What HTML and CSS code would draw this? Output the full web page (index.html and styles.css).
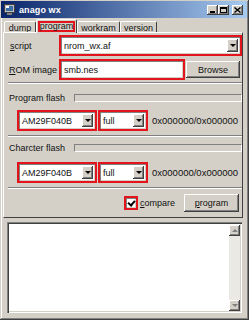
FILE: index.html
```html
<!DOCTYPE html>
<html lang="en">

<head>
  <link rel="stylesheet" href="styles.css">
  <meta charset="UTF-8">
  <title>anago wx</title>
</head>

<body>
<div class="window">
  <div class="titlebar">
    <svg class="app-icon" width="11" height="11" viewBox="0 0 11 11">
      <rect x="0.5" y="0.5" width="10" height="8" fill="#c0c0c0" stroke="#404040"/>
      <rect x="2" y="2" width="7" height="5" fill="#3a6ea5"/>
      <rect x="2" y="2" width="3" height="2" fill="#ffffff"/>
      <rect x="3" y="9" width="5" height="2" fill="#808080"/>
    </svg>
    <span class="title">anago wx</span>
    <div class="caption">
      <span class="cap-btn"><svg width="7" height="6" viewBox="0 0 7 6"><rect x="1" y="4" width="5" height="2" fill="#000"/></svg></span>
      <span class="cap-btn"><svg width="7" height="6" viewBox="0 0 7 6"><rect x="0.5" y="0.5" width="6" height="5" fill="none" stroke="#000"/><rect x="0" y="0" width="7" height="2" fill="#000"/></svg></span>
      <span class="cap-btn close"><svg width="7" height="6" viewBox="0 0 7 6"><path d="M0.5 0.5 L6.5 5.5 M6.5 0.5 L0.5 5.5" stroke="#000" stroke-width="1.4"/></svg></span>
    </div>
  </div>

  <div class="tabs">
    <span class="tab tab-dump">dump</span>
    <span class="tab tab-program active"><span class="mark mark-tab">program</span></span>
    <span class="tab tab-workram">workram</span>
    <span class="tab tab-version">version</span>
  </div>

  <div class="panel">
    <div class="row row-script">
      <span class="label label-script"><u>s</u>cript</span>
      <div class="mark mark-script">
        <div class="combo"><span class="combo-text">nrom_wx.af</span><span class="drop"></span></div>
      </div>
    </div>

    <div class="row row-rom">
      <span class="label"><u>R</u>OM image</span>
      <div class="mark mark-rom">
        <div class="field">smb.nes</div>
      </div>
      <button class="btn btn-browse">Browse</button>
    </div>

    <div class="sep"></div>

    <div class="row row-flash">
      <span class="flash-label">Program flash</span>
      <div class="progress"></div>
    </div>

    <div class="row row-device">
      <div class="mark mark-chip">
        <div class="combo"><span class="combo-text">AM29F040B</span><span class="drop"></span></div>
      </div>
      <div class="mark mark-mode">
        <div class="combo"><span class="combo-text">full</span><span class="drop"></span></div>
      </div>
      <span class="hex">0x000000/0x000000</span>
    </div>

    <div class="sep sep-mid"></div>

    <div class="row row-flash row-flash-2">
      <span class="flash-label">Charcter flash</span>
      <div class="progress"></div>
    </div>

    <div class="row row-device row-device-2">
      <div class="mark mark-chip">
        <div class="combo"><span class="combo-text">AM29F040B</span><span class="drop"></span></div>
      </div>
      <div class="mark mark-mode">
        <div class="combo"><span class="combo-text">full</span><span class="drop"></span></div>
      </div>
      <span class="hex">0x000000/0x000000</span>
    </div>

    <div class="sep sep-mid"></div>

    <div class="row row-action">
      <span class="mark mark-check"><span class="checkbox"></span></span>
      <span class="check-label"><u>c</u>ompare</span>
      <button class="btn btn-program"><u>p</u>rogram</button>
    </div>
  </div>

  <div class="log">
    <div class="log-text"></div>
    <div class="scrollbar">
      <span class="scroll-btn"><span class="arrow-up"></span></span>
      <span class="scroll-track"></span>
      <span class="scroll-btn"><span class="arrow-down"></span></span>
    </div>
  </div>
</div>
</body>

</html>
```

FILE: styles.css
```css
* {
  box-sizing: border-box;
}

body {
  margin: 0;
  font-family: "Liberation Sans", Arial, sans-serif;
  font-size: 9px;
  color: #111;
}

.window {
  width: 249px;
  height: 320px;
  display: flex;
  flex-direction: column;
  padding: 1px 2px 4px 1px;
  background: #d4d0c8;
  box-shadow: inset -1px -1px #404040, inset 1px 1px #d4d0c8, inset -2px -2px #808080, inset 2px 2px #fff;
}

/* title bar */
.titlebar {
  height: 17px;
  display: flex;
  align-items: center;
  padding: 0 4px 0 3px;
  background: linear-gradient(to right, #0a246a, #a6caf0);
  color: #fff;
}

.app-icon {
  margin-right: 4px;
}

.title {
  flex: 1;
  font-weight: bold;
  font-size: 9px;
  letter-spacing: 0.1px;
}

.caption {
  display: flex;
  margin-top: 1px;
}

.cap-btn {
  width: 11px;
  height: 10px;
  display: flex;
  align-items: center;
  justify-content: center;
  background: #d4d0c8;
  box-shadow: inset -1px -1px #404040, inset 1px 1px #fff, inset -2px -2px #808080;
}

.cap-btn.close {
  margin-left: 3px;
}

/* tabs */
.tabs {
  display: flex;
  align-items: flex-end;
  height: 13px;
  margin: 1px 0 0 3px;
}

.tab {
  height: 11px;
  display: flex;
  align-items: center;
  justify-content: center;
  padding-top: 1px;
  border-top: 1px solid #fff;
  border-left: 1px solid #fff;
  border-right: 1px solid #404040;
  border-radius: 2px 2px 0 0;
  background: #d4d0c8;
}

.tab-dump { width: 32px; }
.tab-program { width: 41px; }
.tab-workram { width: 43px; }
.tab-version { width: 37px; }

.tab.active {
  height: 14px;
  margin-bottom: -1px;
  padding-top: 0;
  position: relative;
}

.mark {
  border: 2px solid #e3141b;
}

.mark-tab {
  height: 11px;
  width: 37px;
  display: flex;
  align-items: center;
  justify-content: center;
  line-height: 1;
}

/* tab page */
.panel {
  margin: 0 4px 0 2px;
  padding: 0 0 5px 5px;
  border-top: 1px solid #fff;
  border-left: 1px solid #fff;
  border-right: 1px solid #404040;
  border-bottom: 1px solid #404040;
}

.row {
  display: flex;
  align-items: center;
}

.label {
  width: 50px;
}

.label-script {
  padding-left: 1px;
}

.row-script {
  margin-top: 2px;
}

.mark-script {
  width: 183px;
  height: 21px;
}

.combo {
  height: 100%;
  display: flex;
  align-items: center;
  padding: 2px 2px 2px 3px;
  background: #fff;
  box-shadow: inset 1px 1px #808080, inset -1px -1px #d4d0c8;
}

.combo-text {
  flex: 1;
  white-space: nowrap;
}

.drop {
  width: 11px;
  height: 13px;
  display: flex;
  align-items: center;
  justify-content: center;
  background: #d4d0c8;
  box-shadow: inset -1px -1px #404040, inset 1px 1px #fff, inset -2px -2px #808080;
}

.drop::after,
.arrow-down {
  content: "";
  border-left: 3px solid transparent;
  border-right: 3px solid transparent;
  border-top: 3px solid #000;
}

.row-rom {
  margin-top: 3px;
}

.mark-rom {
  width: 126px;
  height: 21px;
}

.field {
  height: 100%;
  display: flex;
  align-items: center;
  padding-left: 3px;
  background: #fff;
  box-shadow: inset 1px 1px #808080, inset -1px -1px #d4d0c8;
}

.btn {
  font: inherit;
  font-size: 9px;
  color: #111;
  padding: 0;
  border: none;
  background: #d4d0c8;
  box-shadow: inset -1px -1px #404040, inset 1px 1px #fff, inset -2px -2px #808080;
}

.btn-browse {
  width: 54px;
  height: 17px;
  margin-left: 1px;
}

.sep {
  height: 2px;
  margin: 2px 0 0 -1px;
  border-top: 1px solid #808080;
  border-bottom: 1px solid #fff;
}

.sep-mid {
  margin-top: 4px;
}

.row-flash {
  height: 8px;
  margin-top: 10px;
}

.row-flash-2 {
  margin-top: 7px;
}

.flash-label {
  white-space: nowrap;
}

.progress {
  flex: 1;
  height: 8px;
  margin-left: 9px;
  border-top: 1px solid #808080;
  border-left: 1px solid #808080;
  border-right: 1px solid #fff;
  border-bottom: 1px solid #fff;
}

.row-device {
  margin-top: 8px;
  padding-left: 8px;
}

.row-device-2 {
  margin-top: 10px;
}

.mark-chip {
  width: 80px;
  height: 21px;
}

.mark-mode {
  width: 50px;
  height: 21px;
  margin-left: 1px;
}

.hex {
  margin-left: 4px;
  font-size: 9.5px;
  white-space: nowrap;
}

.row-action {
  justify-content: flex-end;
  margin-top: 5px;
  padding-right: 3px;
}

.mark-check {
  width: 14px;
  height: 14px;
  display: flex;
  align-items: center;
  justify-content: center;
}

.checkbox {
  width: 10px;
  height: 10px;
  background: #fff;
  box-shadow: inset 1px 1px #808080, inset -1px -1px #d4d0c8;
  position: relative;
}

.checkbox::after {
  content: "";
  position: absolute;
  left: 3px;
  top: 1px;
  width: 3px;
  height: 5px;
  border-right: 2px solid #000;
  border-bottom: 2px solid #000;
  transform: rotate(40deg);
}

.check-label {
  margin: 0 9px 0 2px;
}

.btn-program {
  width: 55px;
  height: 18px;
}

/* log */
.log {
  flex: 1;
  display: flex;
  margin: 4px 5px 3px 6px;
  padding: 2px;
  background: #fff;
  box-shadow: inset 1px 1px #808080, inset 2px 2px #404040, inset -1px -1px #fff, inset -2px -2px #d4d0c8;
}

.log-text {
  flex: 1;
}

.scrollbar {
  width: 11px;
  display: flex;
  flex-direction: column;
  margin-top: 1px;
}

.scroll-btn {
  height: 11px;
  display: flex;
  align-items: center;
  justify-content: center;
  background: #d4d0c8;
  box-shadow: inset -1px -1px #404040, inset 1px 1px #fff, inset -2px -2px #808080;
}

.arrow-up {
  border-left: 3px solid transparent;
  border-right: 3px solid transparent;
  border-bottom: 3px solid #808080;
}

.arrow-down {
  border-top-color: #808080;
}

.scroll-track {
  flex: 1;
  background: #ebe9e4;
}
```
